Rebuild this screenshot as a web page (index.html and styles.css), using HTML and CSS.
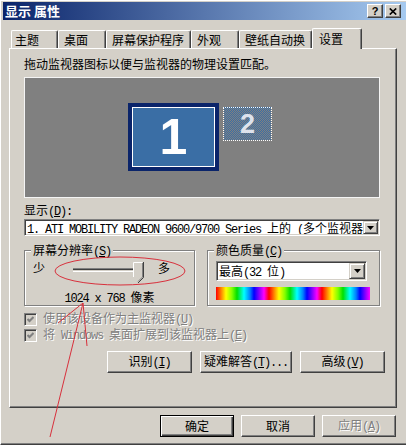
FILE: index.html
```html
<!DOCTYPE html>
<html>
<head>
  <meta charset="utf-8">
  <title>显示 属性</title>
  <link rel="stylesheet" href="styles.css">
</head>
<body>
  <div class="window">
    <div class="titlebar">
      <span class="title">显示 属性</span>
      <div class="title-buttons">
        <button class="cap-btn help">?</button>
        <button class="cap-btn"><svg width="8" height="7" viewBox="0 0 8 7"><path d="M0.8 0.5l6.4 6M7.2 0.5L0.8 6.5" stroke="#000" stroke-width="1.7" fill="none"/></svg></button>
      </div>
    </div>

    <div class="content">
      <div class="tabs">
        <div class="tab first">主题</div>
        <div class="tab">桌面</div>
        <div class="tab">屏幕保护程序</div>
        <div class="tab">外观</div>
        <div class="tab">壁纸自动换</div>
        <div class="tab active">设置</div>
      </div>

      <div class="panel">
        <div class="hint">拖动监视器图标以便与监视器的物理设置匹配。</div>

        <div class="monitors">
          <div class="monitor primary"><div class="screen">1</div></div>
          <div class="monitor secondary">2</div>
        </div>

        <div class="label">显示<span class="en">(<u>D</u>):</span></div>
        <div class="combo wide">
          <div class="combo-text"><span class="en">1. ATI MOBILITY RADEON 9600/9700 Series </span>上的<span class="en"> (</span>多个监视器</div>
          <div class="drop"><svg width="7" height="4" viewBox="0 0 7 4"><path d="M0 0h7L3.5 4z" fill="#000"/></svg></div>
        </div>

        <div class="groups">
          <div class="group res">
            <div class="group-title">屏幕分辨率<span class="en">(<u>S</u>)</span></div>
            <div class="slider-row">
              <span class="end">少</span>
              <div class="slider">
                <div class="track"></div>
                <svg class="thumb" width="11" height="21" viewBox="0 0 11 21">
                  <polygon points="0.5,0.5 9.5,0.5 9.5,15 5,19.5 0.5,15" fill="#d4d0c8"/>
                  <polyline points="0.5,15 0.5,0.5 9.5,0.5" stroke="#fff" fill="none"/>
                  <polyline points="9.5,1 9.5,15 5,19.5" stroke="#808080" fill="none"/>
                  <polyline points="10.5,0 10.5,15.5 5,21" stroke="#404040" fill="none"/>
                </svg>
              </div>
              <span class="end more">多</span>
            </div>
            <div class="res-text"><span class="en">1024 x 768 </span>像素</div>
          </div>

          <div class="group colors">
            <div class="group-title">颜色质量<span class="en">(<u>C</u>)</span></div>
            <div class="combo small">
              <div class="combo-text">最高<span class="en">(32 </span>位<span class="en">)</span></div>
              <div class="drop"><svg width="7" height="4" viewBox="0 0 7 4"><path d="M0 0h7L3.5 4z" fill="#000"/></svg></div>
            </div>
            <div class="spectrum"></div>
          </div>
        </div>

        <div class="checks">
          <div class="check disabled">
            <span class="box"><svg width="7" height="7" viewBox="0 0 7 7"><polyline points="0.5,3 2.5,5 6.5,1" stroke="#808080" stroke-width="2" fill="none"/></svg></span>
            <span>使用该设备作为主监视器<span class="en">(<u>U</u>)</span></span>
          </div>
          <div class="check disabled">
            <span class="box"><svg width="7" height="7" viewBox="0 0 7 7"><polyline points="0.5,3 2.5,5 6.5,1" stroke="#808080" stroke-width="2" fill="none"/></svg></span>
            <span>将<span class="en"> Windows </span>桌面扩展到该监视器上<span class="en">(<u>E</u>)</span></span>
          </div>
        </div>

        <div class="actions">
          <button class="btn identify">识别<span class="en">(<u>I</u>)</span></button>
          <button class="btn trouble">疑难解答<span class="en">(<u>T</u>)...</span></button>
          <button class="btn advanced">高级<span class="en">(<u>V</u>)</span></button>
        </div>
      </div>

      <div class="dialog-buttons">
        <button class="btn dialog default">确定</button>
        <button class="btn dialog">取消</button>
        <button class="btn dialog disabled">应用<span class="en">(<u>A</u>)</span></button>
      </div>
    </div>
  </div>

  <!-- red marks drawn over the screenshot -->
  <svg class="annotation" width="406" height="445" viewBox="0 0 406 445">
    <ellipse cx="120" cy="271" rx="65" ry="14" fill="none" stroke="#d8303c" stroke-width="1"/>
    <path d="M83 303L58 323M83 303L87 346M83 303L50 437" fill="none" stroke="#d8303c" stroke-width="1"/>
  </svg>
</body>
</html>
```

FILE: styles.css
```css
body {
  margin: 0;
  background-color: #d4d0c8;
  font-family: "Noto Sans CJK SC", sans-serif;
  font-size: 12px;
  color: #000;
  overflow: hidden;
  position: relative;
}

.en {
  font-family: "Liberation Mono", monospace;
  font-size: 12px;
  letter-spacing: -1.2px;
}

button {
  font-family: "Noto Sans CJK SC", sans-serif;
  font-size: 12px;
  color: #000;
  padding: 0;
  margin: 0;
  cursor: pointer;
}

.window {
  width: 406px;
  height: 445px;
  box-sizing: border-box;
  border-left: 1px solid #fff;
  border-top: 1px solid #fff;
  border-bottom: 1px solid #404040;
  box-shadow: inset 0 -1px #808080;
  display: flex;
  flex-direction: column;
}

/* title bar */
.titlebar {
  margin: 1px 0 0 2px;
  height: 18px;
  padding: 0 5px 0 2px;
  background: linear-gradient(to right, #0a246a, #a6caf0);
  display: flex;
  align-items: center;
  justify-content: space-between;
}

.title {
  color: #fff;
  font-weight: bold;
  font-size: 13px;
  line-height: 18px;
}

.title-buttons {
  display: flex;
  gap: 2px;
}

.cap-btn {
  width: 16px;
  height: 14px;
  box-sizing: border-box;
  background: #d4d0c8;
  border: 1px solid;
  border-color: #fff #404040 #404040 #fff;
  box-shadow: inset -1px -1px #808080;
  display: flex;
  align-items: center;
  justify-content: center;
}

.cap-btn.help {
  font-family: "Liberation Sans", sans-serif;
  font-weight: bold;
  font-size: 11px;
  line-height: 12px;
}

/* tabs + panel */
.content {
  padding: 8px 9px 0 8px;
}

.tabs {
  display: flex;
  align-items: flex-end;
  height: 20px;
  padding-left: 2px;
}

.tab {
  height: 18px;
  box-sizing: border-box;
  min-width: 48px;
  padding: 0 6px 0 5px;
  border-left: 1px solid #fff;
  border-top: 1px solid #fff;
  border-right: 1px solid #404040;
  box-shadow: inset -1px 0 #808080;
  border-radius: 2px 2px 0 0;
  line-height: 17px;
  white-space: nowrap;
}

.tab.first {
  min-width: 47px;
  padding-left: 3px;
}

.tab.active {
  height: 21px;
  min-width: 50px;
  margin-bottom: -1px;
  padding-left: 6px;
  line-height: 19px;
  background: #d4d0c8;
  position: relative;
  z-index: 1;
}

.panel {
  height: 360px;
  box-sizing: border-box;
  border-left: 1px solid #fff;
  border-top: 1px solid #fff;
  border-right: 1px solid #404040;
  border-bottom: 1px solid #404040;
  box-shadow: inset -1px -1px #808080;
  padding: 8px 16px 0 14px;
  display: flex;
  flex-direction: column;
}

.hint {
  line-height: 14px;
}

/* monitor arrangement */
.monitors {
  margin-top: 6px;
  height: 121px;
  box-sizing: border-box;
  background: #808080;
  border: 1px solid #f4f4f4;
  position: relative;
}

.monitor {
  position: absolute;
  box-sizing: border-box;
}

.monitor.primary {
  left: 103px;
  top: 25px;
  width: 91px;
  height: 68px;
  padding: 4px;
  background: #0a246a;
}

.screen {
  height: 100%;
  box-sizing: border-box;
  border: 1px solid #fff;
  background: #3a6ea5;
  color: #fff;
  font-family: "Liberation Sans", sans-serif;
  font-weight: bold;
  font-size: 50px;
  display: flex;
  align-items: center;
  justify-content: center;
}

.monitor.secondary {
  left: 198px;
  top: 29px;
  width: 49px;
  height: 34px;
  border: 1px dotted #fff;
  background: repeating-conic-gradient(#3a6ea5 0 25%, #808080 0 50%) 0 0 / 2px 2px;
  color: #dde2ec;
  font-family: "Liberation Sans", sans-serif;
  font-weight: bold;
  font-size: 27px;
  display: flex;
  align-items: center;
  justify-content: center;
}

.label {
  margin-top: 5px;
  line-height: 14px;
}

/* combo boxes */
.combo {
  display: flex;
  box-sizing: border-box;
  background: #fff;
  border: 1px solid;
  border-color: #808080 #fff #fff #808080;
  box-shadow: inset 1px 1px #404040, inset -1px -1px #d4d0c8;
  padding: 1px;
}

.combo.wide {
  height: 17px;
}

.combo.small {
  width: 151px;
  height: 20px;
  margin-top: 2px;
}

.combo-text {
  flex: 1;
  overflow: hidden;
  white-space: nowrap;
  padding-left: 1px;
  line-height: 13px;
}

.combo.small .combo-text {
  line-height: 16px;
}

.drop {
  width: 15px;
  box-sizing: border-box;
  background: #d4d0c8;
  border: 1px solid;
  border-color: #d4d0c8 #404040 #404040 #d4d0c8;
  box-shadow: inset 1px 1px #fff, inset -1px -1px #808080;
  display: flex;
  align-items: center;
  justify-content: center;
}

.combo.small .drop {
  width: 16px;
}

/* group boxes */
.groups {
  margin-top: 7px;
  display: flex;
  gap: 12px;
}

.group {
  margin-top: 7px;
  height: 56px;
  box-sizing: border-box;
  border: 1px solid #808080;
  box-shadow: inset 1px 1px #fff, 1px 1px #fff;
  display: flex;
  flex-direction: column;
}

.group.res {
  width: 171px;
  padding: 0 8px;
}

.group.colors {
  flex: 1;
  padding: 0 9px 0 8px;
}

.group-title {
  align-self: flex-start;
  margin: -8px 0 0 -2px;
  padding: 0 2px;
  background: #d4d0c8;
  line-height: 14px;
}

.slider-row {
  margin-top: 2px;
  height: 21px;
  display: flex;
  align-items: flex-start;
}

.end {
  line-height: 13px;
}

.slider {
  width: 75px;
  height: 21px;
  margin-left: 23px;
  position: relative;
}

.track {
  margin: 7px 3px 0 5px;
  height: 4px;
  box-sizing: border-box;
  border-top: 1px solid #808080;
  border-bottom: 1px solid #fff;
  box-shadow: inset 0 1px #404040;
}

.thumb {
  position: absolute;
  left: 65px;
  top: 1px;
}

.more {
  margin-left: 15px;
}

.res-text {
  margin-top: 8px;
  line-height: 14px;
  text-align: center;
}

.spectrum {
  margin-top: 6px;
  height: 13px;
  background: repeating-linear-gradient(to right,
    #ff0000 0px, #ff8000 5px, #ffff00 10px, #80ff00 16px, #00e000 21px,
    #00ffff 28px, #0080ff 34px, #0000ff 38px, #8000ff 43px, #ff00ff 48px, #ff0000 53px);
}

/* checkboxes */
.checks {
  margin-top: 5px;
}

.check {
  height: 16px;
  display: flex;
  align-items: center;
  gap: 6px;
  line-height: 14px;
}

.box {
  width: 13px;
  height: 13px;
  box-sizing: border-box;
  border: 1px solid;
  border-color: #808080 #fff #fff #808080;
  box-shadow: inset 1px 1px #404040, inset -1px -1px #d4d0c8;
  background: #d4d0c8;
  display: flex;
  align-items: center;
  justify-content: center;
}

.disabled {
  color: #808080;
  text-shadow: 1px 1px 0 #fff;
}

/* buttons */
.btn {
  height: 22px;
  box-sizing: border-box;
  background: #d4d0c8;
  border: 1px solid;
  border-color: #fff #404040 #404040 #fff;
  box-shadow: inset -1px -1px #808080;
  line-height: 18px;
}

.actions {
  margin-top: 8px;
  margin-right: -5px;
  display: flex;
  justify-content: flex-end;
  gap: 8px;
}

.identify { width: 85px; }
.trouble { width: 92px; }
.advanced { width: 85px; }

.dialog-buttons {
  margin-top: 7px;
  padding-right: 1px;
  display: flex;
  justify-content: flex-end;
  gap: 7px;
}

.btn.dialog {
  width: 74px;
}

.btn.default {
  border-color: #000;
  box-shadow: inset 1px 1px #fff, inset -1px -1px #404040, inset -2px -2px #808080;
}

.btn.disabled {
  color: #808080;
  cursor: default;
}

.annotation {
  position: absolute;
  left: 0;
  top: 0;
  pointer-events: none;
}
```
